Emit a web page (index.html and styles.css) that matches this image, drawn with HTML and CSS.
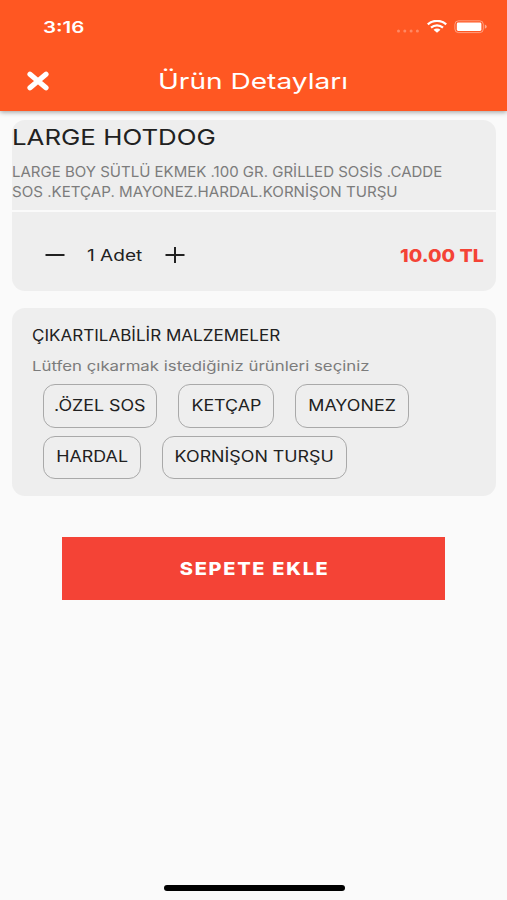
FILE: index.html
```html
<!DOCTYPE html>
<html lang="tr">
<head>
<meta charset="utf-8">
<title>Ürün Detayları</title>
<link rel="stylesheet" href="styles.css">
</head>
<body>
<header class="appbar">
  <div class="status">
    <span class="wide clock">3:16</span>
    <div class="indicators">
      <svg class="dots" width="24" height="4" viewBox="0 0 24 4"><g fill="#fff" fill-opacity=".3"><circle cx="2.5" cy="2" r="1.5"/><circle cx="8.8" cy="2" r="1.5"/><circle cx="15.1" cy="2" r="1.5"/><circle cx="21.4" cy="2" r="1.5"/></g></svg>
      <svg class="wifi" width="20" height="13" viewBox="0 0 20 13"><g fill="none" stroke="#fff" stroke-width="2.3"><path d="M.8 4.4C6-.3 14-.3 19.2 4.4"/><path d="M4 7.6c3.4-3 8.6-3 12 0"/></g><path d="M6.5 9.8c2-1.6 5-1.6 7 0L10 12.8z" fill="#fff"/></svg>
      <svg class="battery" width="34" height="14" viewBox="0 0 34 14"><rect x=".9" y=".8" width="28.4" height="11.8" rx="3.6" fill="none" stroke="#fff" stroke-opacity=".42"/><rect x="2.8" y="2.5" width="24.6" height="8.4" rx="1.4" fill="#fff"/><path d="M30.8 4.6c2.6.8 2.6 3.4 0 4.2z" fill="#fff" fill-opacity=".5"/></svg>
    </div>
  </div>
  <div class="toolbar">
    <svg class="close" width="24" height="20" viewBox="0 0 24 20"><path d="M4 3.2l16 13.6M20 3.2L4 16.8" stroke="#fff" stroke-width="5.2" stroke-linecap="round"/></svg>
    <h1 class="wide page-title">Ürün Detayları</h1>
  </div>
</header>
<main>
  <section class="card product">
    <div class="info">
      <h2 class="wide name">LARGE HOTDOG</h2>
      <p class="desc"><span class="wide line1">LARGE BOY SÜTLÜ EKMEK .100 GR. GRİLLED SOSİS .CADDE</span><span class="wide line2">SOS .KETÇAP. MAYONEZ.HARDAL.KORNİŞON TURŞU</span></p>
    </div>
    <div class="order">
      <svg width="20" height="18" viewBox="0 0 20 18"><path d="M.5 9h19" stroke="#212121" stroke-width="2"/></svg>
      <span class="wide quantity">1 Adet</span>
      <svg width="20" height="18" viewBox="0 0 20 18"><path d="M.5 9h19M10 1v16" stroke="#212121" stroke-width="2"/></svg>
      <strong class="wide price">10.00 TL</strong>
    </div>
  </section>
  <section class="card extras">
    <h3 class="wide extras-title">ÇIKARTILABİLİR MALZEMELER</h3>
    <p class="wide hint">Lütfen çıkarmak istediğiniz ürünleri seçiniz</p>
    <div class="chips">
      <button class="chip ozel"><span class="wide">.ÖZEL SOS</span></button>
      <button class="chip ketcap"><span class="wide">KETÇAP</span></button>
      <button class="chip mayonez"><span class="wide">MAYONEZ</span></button>
      <button class="chip hardal"><span class="wide">HARDAL</span></button>
      <button class="chip kornison"><span class="wide">KORNİŞON TURŞU</span></button>
    </div>
  </section>
  <button class="add"><span class="wide">SEPETE EKLE</span></button>
</main>
<div class="home"></div>
</body>
</html>
```

FILE: styles.css
```css
* { box-sizing: border-box; }
body { margin: 0; height: 900px; display: flex; flex-direction: column; background: #fafafa; color: #212121; font-family: Inter, "Liberation Sans", sans-serif; overflow: hidden; }
h1, h2, h3, p { margin: 0; font-weight: 400; }
button { font: inherit; color: inherit; padding: 0; background: none; }
svg { display: block; flex: none; }
.wide { display: block; width: max-content; white-space: nowrap; transform: scaleX(var(--sx, 1.15)); transform-origin: left center; }

.appbar { height: 111px; flex: none; background: #ff5722; color: #fff; box-shadow: 0 1px 5px rgba(0, 0, 0, .4); }
.status { height: 53px; display: flex; justify-content: space-between; padding: 0 19px 0 43px; align-items: center; }
.clock { --sx: 1.28; font-size: 16px; font-weight: 600; }
.indicators { display: flex; align-items: center; }
.dots { margin: 8px 7px 0 0; }
.wifi { margin-right: 7px; }
.toolbar { height: 56px; display: flex; align-items: center; padding-left: 26px; }
.page-title { --sx: 1.275; font-size: 22px; margin-left: 108px; }

main { flex: 1; display: flex; flex-direction: column; padding: 9px 11px 0 12px; }
.card { background: #eee; border-radius: 13px; flex: none; }
.product { height: 171px; margin-bottom: 17px; }
.info { height: 91.5px; border-bottom: 2px solid #fafafa; }
.name { --sx: 1.175; font-size: 22px; line-height: 34px; }
.desc { color: #7c7c7c; font-size: 14.3px; line-height: 20px; padding-top: 8px; }
.line1 { --sx: 1.05; }
.line2 { --sx: 1.057; }
.order { height: 79px; display: flex; align-items: center; padding: 8px 12px 0 33px; }
.quantity { --sx: 1.23; font-size: 15.5px; line-height: 20px; margin: 1px 0 0 22px; flex: 0 0 78px; }
.price { --sx: 1.09; color: #f44336; font-size: 18px; font-weight: 800; margin-left: auto; transform-origin: right center; }

.extras { height: 188px; padding: 16px 20px 0; margin-bottom: 41px; }
.extras-title { --sx: 1.1; font-size: 15.5px; line-height: 24px; }
.hint { --sx: 1.245; color: #7c7c7c; font-size: 13.5px; line-height: 20px; margin-top: 8px; }
.chips { display: flex; flex-wrap: wrap; gap: 8px 21px; padding: 8px 0 0 11px; }
.chip { height: 43.5px; border: 1px solid #a9a9a9; border-radius: 12px; display: flex; align-items: center; justify-content: center; font-size: 15.5px; padding-bottom: 1px; }
.chip .wide, .add .wide { --sx: 1.15; transform-origin: center; }
.ozel { width: 114px; }
.ketcap { width: 96px; }
.mayonez { width: 114px; }
.hardal { width: 98px; }
.kornison { width: 185px; }
.add { width: 383px; height: 63px; margin-left: 50.4px; border: 0; background: #f44336; color: #fff; display: flex; align-items: center; justify-content: center; font-size: 17.5px; font-weight: 800; letter-spacing: 1.5px; flex: none; }
.add .wide { --sx: 1.14; margin-left: 1px; }
.home { width: 181px; height: 6px; border-radius: 3px; background: #000; margin: 0 auto 9px; position: relative; left: 1px; flex: none; }
```
